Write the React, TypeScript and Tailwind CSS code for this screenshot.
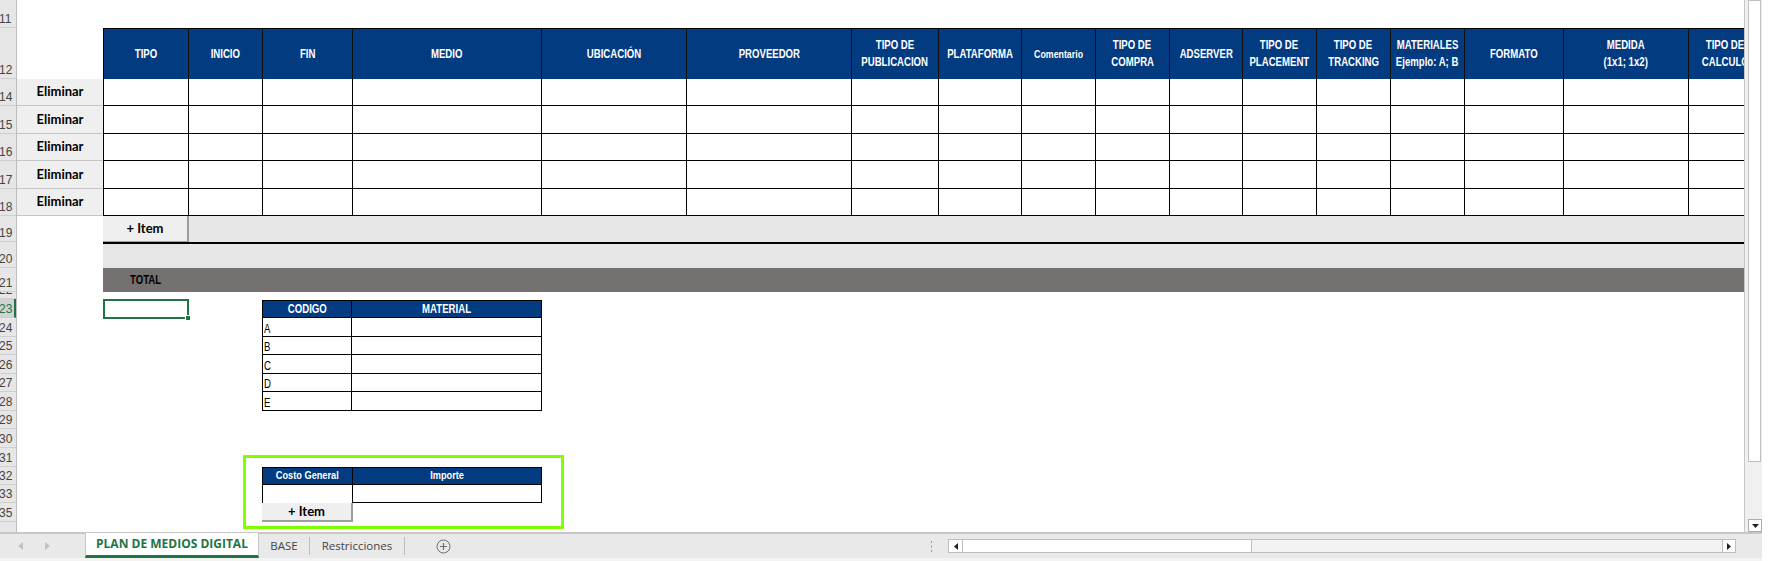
import React from 'react';

// Arial Narrow stand-in: Liberation Sans squeezed horizontally
const narrow = "font-['Liberation_Sans',Arial,sans-serif]";
const squeeze = 'inline-block scale-x-80 whitespace-nowrap';
const ui = "font-['Open_Sans','Noto_Sans',sans-serif]";
const btnFont = "font-['Lato','Liberation_Sans',sans-serif]";

const COLS = [
  { w: 'w-[85px]', label: ['TIPO'] },
  { w: 'w-[74px]', label: ['INICIO'] },
  { w: 'w-[90px]', label: ['FIN'] },
  { w: 'w-[189px]', label: ['MEDIO'] },
  { w: 'w-[145px]', label: ['UBICACIÓN'] },
  { w: 'w-[165px]', label: ['PROVEEDOR'] },
  { w: 'w-[87px]', label: ['TIPO DE', 'PUBLICACION'] },
  { w: 'w-[83px]', label: ['PLATAFORMA'] },
  { w: 'w-[74px]', label: ['Comentario'], small: true },
  { w: 'w-[74px]', label: ['TIPO DE', 'COMPRA'] },
  { w: 'w-[73px]', label: ['ADSERVER'] },
  { w: 'w-[74px]', label: ['TIPO DE', 'PLACEMENT'] },
  { w: 'w-[74px]', label: ['TIPO DE', 'TRACKING'] },
  { w: 'w-[74px]', label: ['MATERIALES', 'Ejemplo: A; B'] },
  { w: 'w-[99px]', label: ['FORMATO'] },
  { w: 'w-[125px]', label: ['MEDIDA', '(1x1; 1x2)'] },
  { w: 'w-[74px]', label: ['TIPO DE', 'CALCULO'] },
];

const BODY_ROWS = ['h-[27px]', 'h-[28px]', 'h-[27px]', 'h-[28px]', 'h-[27px]'];

const ROW_HEADS: [string, string][] = [
  ['11', 'h-[28px]'], ['12', 'h-[51px]'], ['14', 'h-[27px]'], ['15', 'h-[28px]'],
  ['16', 'h-[27px]'], ['17', 'h-[28px]'], ['18', 'h-[27px]'], ['19', 'h-[26px]'],
  ['20', 'h-[26px]'], ['21', 'h-[24px]'], ['22', 'h-[7px]'], ['23', 'h-[19px]'],
  ['24', 'h-[19px]'], ['25', 'h-[18px]'], ['26', 'h-[19px]'], ['27', 'h-[18px]'],
  ['28', 'h-[19px]'], ['29', 'h-[18px]'], ['30', 'h-[19px]'], ['31', 'h-[19px]'],
  ['32', 'h-[18px]'], ['33', 'h-[18px]'], ['35', 'h-[19px]'], ['', 'h-[11px]'],
];

const CODE_ROWS: [string, string][] = [
  ['A', 'h-[19px]'], ['B', 'h-[18px]'], ['C', 'h-[19px]'], ['D', 'h-[18px]'], ['E', 'h-[19px]'],
];

function RowHeaders() {
  return (
    <div className="w-[17px] shrink-0 bg-[#e6e6e6] border-r border-[#bdbdbd] overflow-hidden">
      {ROW_HEADS.map(([n, h], i) => (
        <div
          key={i}
          className={`${h} flex items-end overflow-hidden border-b border-[#cfcfcf] text-[12px] leading-[14px] font-['Liberation_Sans',sans-serif] ${
            n === '23' ? 'bg-[#d2d2d2] text-[#217346] border-r-2 border-r-[#217346]' : 'text-[#444]'
          }`}
        >
          <span className="-ml-[1px] pb-[1px]">{n}</span>
        </div>
      ))}
    </div>
  );
}

function HeaderRow() {
  return (
    <div className="flex h-[51px] ml-[86px] border-t border-l border-black bg-[#033b81]">
      {COLS.map((c, i) => (
        <div
          key={i}
          className={`${c.w} shrink-0 h-full border-r border-[#111] flex flex-col items-center justify-center text-white font-bold ${narrow} ${
            c.small ? 'text-[11px]' : 'text-[12px]'
          } leading-[17px] overflow-hidden`}
        >
          {c.label.map((l) => (
            <span key={l} className={squeeze}>{l}</span>
          ))}
        </div>
      ))}
    </div>
  );
}

function SheetButton({ label, className }: { label: string; className: string }) {
  return (
    <div
      className={`${className} shrink-0 flex items-center justify-center bg-[#efefef] border-b border-r border-[#9d9d9d] text-black font-bold text-[13px] ${btnFont}`}
    >
      {label}
    </div>
  );
}

function Sheet() {
  return (
    <div className="w-[1727px] shrink-0 overflow-hidden bg-white">
      <div className="w-[1800px]">
        <div className="h-[28px]" />
        <HeaderRow />
        {BODY_ROWS.map((h, r) => (
          <div key={r} className={`flex ${h}`}>
            <SheetButton label="Eliminar" className="w-[86px] h-full border-r-0 border-[#c4c4c4]" />
            <div className="flex border-l border-black">
              {COLS.map((c, i) => (
                <div key={i} className={`${c.w} shrink-0 h-full border-r border-b border-black bg-white`} />
              ))}
            </div>
          </div>
        ))}
        {/* + Item row */}
        <div className="flex h-[26px] ml-[86px]">
          <SheetButton label="+ Item" className="w-[86px] h-full border-r-2" />
          <div className="flex-1 bg-[#e7e6e6]" />
        </div>
        <div className="ml-[86px] h-[2px] bg-black" />
        <div className="ml-[86px] h-[24px] bg-[#e7e6e6]" />
        <div className={`ml-[86px] h-[24px] bg-[#767171] flex items-center pl-[27px] text-[12px] font-bold text-black ${narrow}`}>
          <span className={`${squeeze} origin-left`}>TOTAL</span>
        </div>

        <div className="h-[7px]" />
        <div className="flex items-start">
          {/* active cell */}
          <div className="ml-[86px] w-[86px] h-[20px] border-2 border-[#217346] relative">
            <div className="absolute -right-[4px] -bottom-[4px] w-[6px] h-[6px] bg-[#217346] border border-white" />
          </div>
          <div className="ml-[73px] mt-[1px] w-[280px]">
            <div className={`flex h-[18px] bg-[#033b81] border border-black text-white font-bold text-[12px] ${narrow}`}>
              <div className="w-[89px] border-r border-black flex items-center justify-center">
                <span className={squeeze}>CODIGO</span>
              </div>
              <div className="flex-1 flex items-center justify-center">
                <span className={squeeze}>MATERIAL</span>
              </div>
            </div>
            {CODE_ROWS.map(([l, h]) => (
              <div key={l} className={`flex ${h} border-l border-r border-b border-black text-[12px] text-black ${narrow}`}>
                <div className="w-[89px] border-r border-black flex items-end pl-[1px] leading-[14px]">
                  <span className={`${squeeze} origin-left`}>{l}</span>
                </div>
                <div className="flex-1" />
              </div>
            ))}
          </div>
        </div>

        {/* highlighted block */}
        <div className="ml-[226px] mt-[44px] w-[321px] h-[74px] border-[3px] border-[#80ff00] pt-[9px] pl-[16px]">
          <div className="w-[280px]">
            <div className={`flex h-[18px] bg-[#033b81] border border-black text-white font-bold text-[11.5px] ${narrow}`}>
              <div className="w-[90px] border-r border-black flex items-center justify-center">
                <span className={squeeze}>Costo General</span>
              </div>
              <div className="flex-1 flex items-center justify-center">
                <span className={squeeze}>Importe</span>
              </div>
            </div>
            <div className="flex h-[18px]">
              <div className="w-[91px] border-l border-r border-black" />
              <div className="flex-1 border-r border-b border-black" />
            </div>
            <SheetButton label="+ Item" className="w-[91px] h-[19px] border-r-2 border-b-2" />
          </div>
        </div>
      </div>
    </div>
  );
}

function VScroll() {
  return (
    <div className="w-[18px] shrink-0 bg-[#f0f0f0] border-l border-[#c6c6c6] flex flex-col pl-[3px] pr-[1px]">
      <div className="h-[462px] w-[13px] bg-white border border-[#bfbfbf]" />
      <div className="flex-1" />
      <div className="h-[13px] w-[14px] bg-white border border-[#acacac] flex items-center justify-center">
        <svg width="7" height="4" viewBox="0 0 7 4"><path d="M0 0h7L3.5 4z" fill="#222" /></svg>
      </div>
    </div>
  );
}

function TabBar() {
  return (
    <div className={`flex w-[1762px] h-[25px] bg-[#e9e9e9] border-t border-[#c6c6c6] ${ui}`}>
      <div className="w-[85px] shrink-0 flex items-center">
        <svg className="ml-[18px]" width="5" height="8" viewBox="0 0 5 8"><path d="M5 0v8L0 4z" fill="#c2c2c2" /></svg>
        <svg className="ml-[22px]" width="5" height="8" viewBox="0 0 5 8"><path d="M0 0v8l5-4z" fill="#c2c2c2" /></svg>
      </div>
      <div className="w-[174px] shrink-0 bg-white border-l border-r border-[#c6c6c6] border-b-[3px] border-b-[#217346] flex items-center justify-center text-[12px] font-bold text-[#217346] -mt-[1px]">
        PLAN DE MEDIOS DIGITAL
      </div>
      <div className="w-[51px] shrink-0 border-r border-[#bdbdbd] my-[3px] flex items-center justify-center text-[11.5px] text-[#444]">
        BASE
      </div>
      <div className="w-[95px] shrink-0 border-r border-[#bdbdbd] my-[3px] flex items-center justify-center text-[11.5px] text-[#444]">
        Restricciones
      </div>
      <div className="w-[76px] shrink-0 flex items-center justify-center">
        <svg width="15" height="15" viewBox="0 0 15 15">
          <circle cx="7.5" cy="7.5" r="6.5" fill="none" stroke="#6f6f6f" strokeWidth="1" />
          <path d="M7.5 4v7M4 7.5h7" stroke="#6f6f6f" strokeWidth="1.2" />
        </svg>
      </div>
      <div className="w-[456px] shrink-0 flex items-center justify-end pr-[4px]">
        <svg width="3" height="11" viewBox="0 0 3 11">
          <rect x="1" y="0" width="1" height="2" fill="#9a9a9a" />
          <rect x="1" y="4.5" width="1" height="2" fill="#9a9a9a" />
          <rect x="1" y="9" width="1" height="2" fill="#9a9a9a" />
        </svg>
      </div>
      <div className="w-[11px] shrink-0" />
      <div className="w-[788px] shrink-0 flex items-center">
        <div className="flex h-[14px] w-full bg-[#f3f3f3] border border-[#bdbdbd]">
          <div className="w-[14px] border-r border-[#bdbdbd] bg-white flex items-center justify-center">
            <svg width="4" height="7" viewBox="0 0 4 7"><path d="M4 0v7L0 3.5z" fill="#222" /></svg>
          </div>
          <div className="w-[289px] bg-white border-r border-[#bdbdbd]" />
          <div className="flex-1" />
          <div className="w-[13px] border-l border-[#bdbdbd] bg-white flex items-center justify-center">
            <svg width="4" height="7" viewBox="0 0 4 7"><path d="M0 0v7l4-3.5z" fill="#222" /></svg>
          </div>
        </div>
      </div>
      <div className="flex-1" />
    </div>
  );
}

export default function App() {
  return (
    <div className="w-[1776px] h-[561px] bg-white overflow-hidden flex flex-col">
      <div className="flex h-[533px] border-b border-[#c6c6c6] w-[1762px]">
        <RowHeaders />
        <Sheet />
        <VScroll />
      </div>
      <TabBar />
      <div className="h-[3px] w-[1762px] bg-[#f3f3f3]" />
    </div>
  );
}
